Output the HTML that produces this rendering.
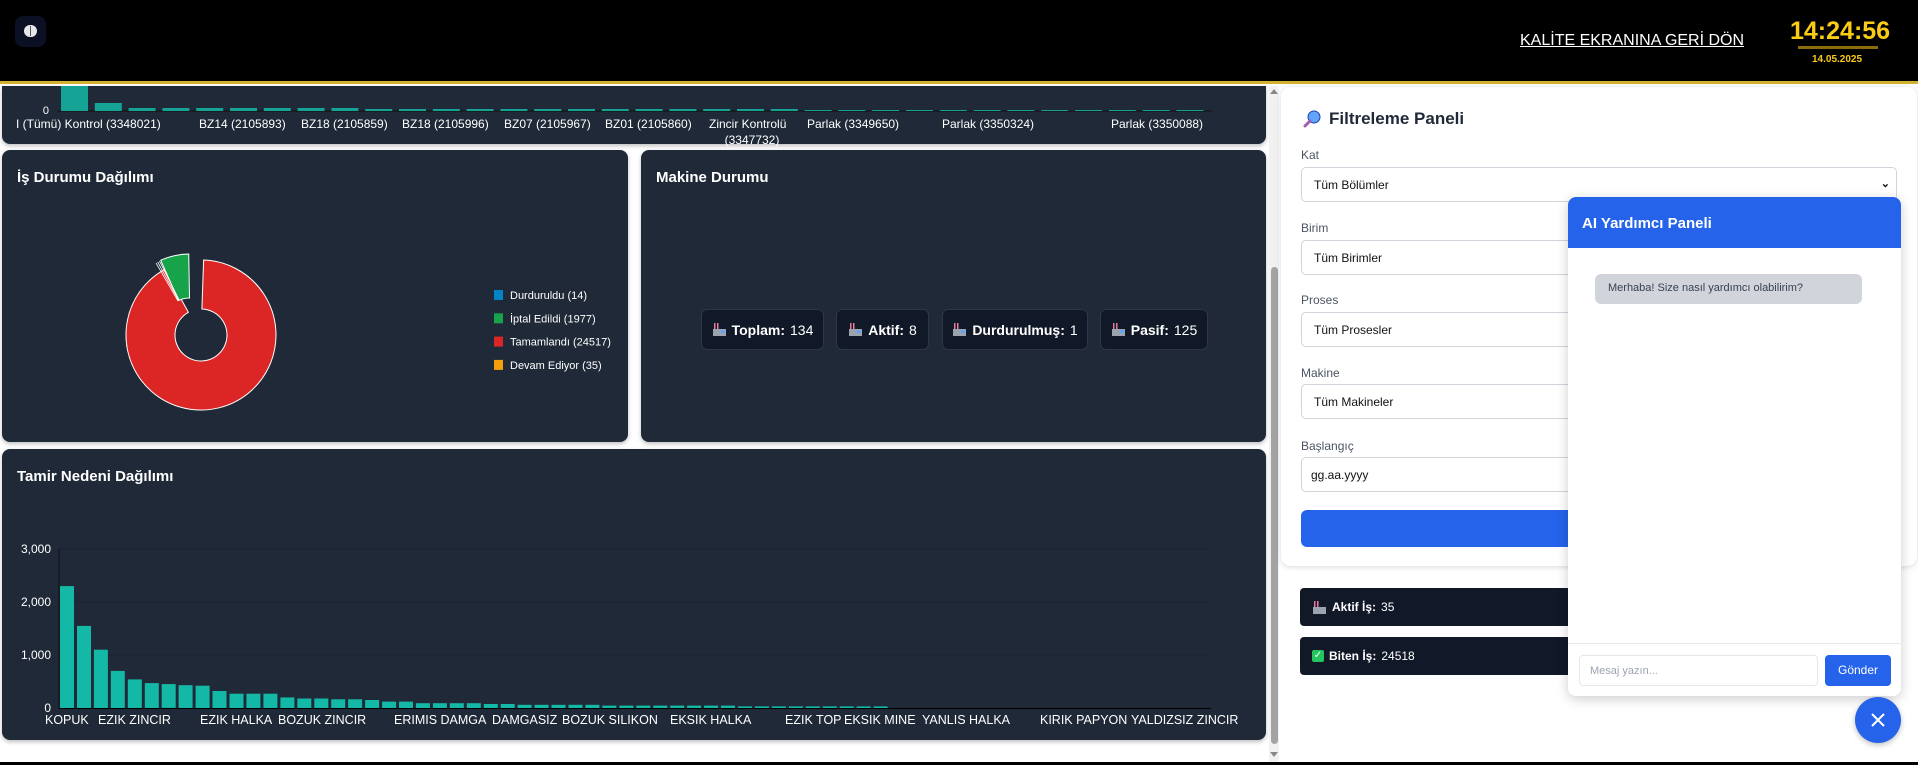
<!DOCTYPE html>
<html><head><meta charset="utf-8">
<style>
*{box-sizing:border-box;margin:0;padding:0}
html,body{width:1918px;height:765px;overflow:hidden;background:#fff;font-family:"Liberation Sans",sans-serif}
.abs{position:absolute}
.card{position:absolute;background:#1f2937;border-radius:8px;box-shadow:0 2px 4px rgba(0,0,0,.25)}
.ct{position:absolute;color:#fff;font-weight:bold;font-size:15px}
.stat{position:absolute;top:309px;height:41px;background:#111827;border:1px solid #2d3748;border-radius:6px;color:#fff;font-size:14px;display:flex;align-items:center;justify-content:center;gap:5px}
.lbl{position:absolute;left:1301px;font-size:12px;color:#4b5563}
.inp{position:absolute;left:1301px;width:596px;height:35px;border:1px solid #d1d5db;border-radius:5px;background:#fff;font-size:12px;color:#111;padding-left:12px;display:flex;align-items:center}
.fac{display:inline-block;width:15px;height:13px}
</style></head><body>
<div class="abs" style="left:0;top:0;width:1918px;height:81px;background:#000"></div>
<div class="abs" style="left:0;top:81px;width:1918px;height:3px;background:#d4b030"></div>
<div class="abs" style="left:15px;top:16px;width:31px;height:31px;background:#0b1024;border-radius:8px"></div>
<div class="abs" style="left:24px;top:25px;width:13px;height:12px;background:#e5e7eb;border-radius:6px"></div>
<div class="abs" style="left:30px;top:26px;width:1px;height:10px;background:#555"></div>
<div class="abs" style="left:1520px;top:32px;color:#fff;font-size:16px;text-decoration:underline;white-space:nowrap">KALİTE EKRANINA GERİ DÖN</div>
<div class="abs" style="left:1790px;top:17px;color:#facc15;font-size:25px;font-weight:bold;white-space:nowrap">14:24:56</div>
<div class="abs" style="left:1798px;top:46px;width:80px;height:3px;background:#8a6d0a"></div>
<div class="abs" style="left:1812px;top:54px;color:#facc15;font-size:10px;font-weight:bold">14.05.2025</div>

<div class="card" style="left:2px;top:86px;width:1264px;height:58px;border-radius:0 0 8px 8px"></div>
<div class="card" style="left:2px;top:150px;width:626px;height:292px"></div>
<div class="card" style="left:641px;top:150px;width:625px;height:292px"></div>
<div class="card" style="left:2px;top:449px;width:1264px;height:291px"></div>
<div class="ct" style="left:17px;top:169px">İş Durumu Dağılımı</div>
<div class="ct" style="left:656px;top:169px">Makine Durumu</div>
<div class="ct" style="left:17px;top:468px">Tamir Nedeni Dağılımı</div>

<svg id="sv" class="abs" style="left:0;top:0" width="1280" height="765" font-family="Liberation Sans, sans-serif"></svg>

<div class="stat" style="left:701px;width:123px"><svg class="fac" viewBox="0 0 15 13"><rect x="2" y="0" width="1.5" height="7" fill="#e879a0"/><rect x="5" y="0" width="1.5" height="7" fill="#e879a0"/><rect x="1" y="6" width="13" height="7" fill="#9ca3af"/><rect x="9" y="7" width="4" height="3" fill="#60a5fa"/></svg><b>Toplam:</b> 134</div>
<div class="stat" style="left:836px;width:93px"><svg class="fac" viewBox="0 0 15 13"><rect x="2" y="0" width="1.5" height="7" fill="#e879a0"/><rect x="5" y="0" width="1.5" height="7" fill="#e879a0"/><rect x="1" y="6" width="13" height="7" fill="#9ca3af"/><rect x="9" y="7" width="4" height="3" fill="#60a5fa"/></svg><b>Aktif:</b> 8</div>
<div class="stat" style="left:942px;width:146px"><svg class="fac" viewBox="0 0 15 13"><rect x="2" y="0" width="1.5" height="7" fill="#e879a0"/><rect x="5" y="0" width="1.5" height="7" fill="#e879a0"/><rect x="1" y="6" width="13" height="7" fill="#9ca3af"/><rect x="9" y="7" width="4" height="3" fill="#60a5fa"/></svg><b>Durdurulmuş:</b> 1</div>
<div class="stat" style="left:1100px;width:108px"><svg class="fac" viewBox="0 0 15 13"><rect x="2" y="0" width="1.5" height="7" fill="#e879a0"/><rect x="5" y="0" width="1.5" height="7" fill="#e879a0"/><rect x="1" y="6" width="13" height="7" fill="#9ca3af"/><rect x="9" y="7" width="4" height="3" fill="#60a5fa"/></svg><b>Pasif:</b> 125</div>

<div class="abs" style="left:1269px;top:86px;width:10px;height:676px;background:#f1f1f1"></div>
<div class="abs" style="left:1271px;top:267px;width:7px;height:477px;background:#a3a3a3;border-radius:4px"></div>
<div class="abs" style="left:1270px;top:89px;width:0;height:0;border-left:4px solid transparent;border-right:4px solid transparent;border-bottom:5px solid #888"></div>
<div class="abs" style="left:1270px;top:752px;width:0;height:0;border-left:4px solid transparent;border-right:4px solid transparent;border-top:5px solid #888"></div>

<div class="abs" style="left:1281px;top:87px;width:636px;height:479px;background:#fff;border-radius:10px;box-shadow:0 1px 6px rgba(0,0,0,.15)"></div>
<svg class="abs" style="left:1303px;top:110px" width="18" height="18" viewBox="0 0 18 18"><circle cx="11" cy="7" r="6" fill="#60a5fa" stroke="#1e40af" stroke-width="1"/><line x1="7" y1="11" x2="2" y2="16" stroke="#9d5fb0" stroke-width="3" stroke-linecap="round"/></svg>
<div class="abs" style="left:1329px;top:109px;font-size:17px;font-weight:bold;color:#1f2937">Filtreleme Paneli</div>
<div class="lbl" style="top:148px">Kat</div>
<div class="inp" style="top:167px">Tüm Bölümler<span style="position:absolute;right:6px;top:9px;font-size:11px;font-weight:bold">&#8964;</span></div>
<div class="lbl" style="top:221px">Birim</div>
<div class="inp" style="top:240px">Tüm Birimler</div>
<div class="lbl" style="top:293px">Proses</div>
<div class="inp" style="top:312px">Tüm Prosesler</div>
<div class="lbl" style="top:366px">Makine</div>
<div class="inp" style="top:384px">Tüm Makineler</div>
<div class="lbl" style="top:439px">Başlangıç</div>
<div class="inp" style="top:457px;padding-left:9px">gg.aa.yyyy</div>
<div class="abs" style="left:1301px;top:510px;width:596px;height:37px;background:#2563eb;border-radius:6px"></div>
<div class="abs" style="left:1300px;top:588px;width:600px;height:38px;background:#111827;border-radius:4px;color:#fff;font-size:12px;display:flex;align-items:center;padding-left:12px;gap:5px"><svg class="fac" viewBox="0 0 15 13"><rect x="2" y="0" width="1.5" height="7" fill="#e879a0"/><rect x="5" y="0" width="1.5" height="7" fill="#e879a0"/><rect x="1" y="6" width="13" height="7" fill="#9ca3af"/></svg><b>Aktif İş:</b> 35</div>
<div class="abs" style="left:1300px;top:637px;width:600px;height:38px;background:#111827;border-radius:4px;color:#fff;font-size:12px;display:flex;align-items:center;padding-left:12px;gap:5px"><span style="display:inline-block;width:12px;height:12px;background:#22c55e;border-radius:2px;color:#fff;font-size:10px;line-height:12px;text-align:center">✓</span><b>Biten İş:</b> 24518</div>

<div class="abs" style="left:1568px;top:197px;width:333px;height:499px;background:#fff;border-radius:8px;box-shadow:0 3px 12px rgba(0,0,0,.2);overflow:hidden">
 <div style="height:51px;background:#2563eb;color:#fff;font-weight:bold;font-size:15px;padding:18px 0 0 14px">AI Yardımcı Paneli</div>
 <div style="position:absolute;left:27px;top:77px;width:267px;height:30px;background:#d1d5db;border-radius:6px;font-size:11px;color:#374151;padding:8px 0 0 13px">Merhaba! Size nasıl yardımcı olabilirim?</div>
 <div style="position:absolute;left:0;top:446px;width:333px;height:1px;background:#e5e7eb"></div>
 <div style="position:absolute;left:11px;top:458px;width:239px;height:31px;border:1px solid #e5e7eb;border-radius:4px;font-size:11px;color:#9ca3af;padding:9px 0 0 10px">Mesaj yazın...</div>
 <div style="position:absolute;left:257px;top:458px;width:66px;height:31px;background:#2563eb;border-radius:4px;color:#fff;font-size:12px;text-align:center;line-height:31px">Gönder</div>
</div>
<div class="abs" style="left:1855px;top:697px;width:46px;height:46px;border-radius:50%;background:#2563eb;box-shadow:0 2px 6px rgba(0,0,0,.25)"></div>
<svg class="abs" style="left:1871px;top:713px" width="14" height="14"><path d="M1 1L13 13M13 1L1 13" stroke="#fff" stroke-width="2"/></svg>
<div class="abs" style="left:0;top:762px;width:1918px;height:3px;background:#000"></div>

<script>
var sv=document.getElementById('sv'),h='';
h+='<text x="49" y="114" fill="#fff" font-size="11" text-anchor="end">0</text>';
h+='<line x1="58" y1="111" x2="1212" y2="111" stroke="#111"/>';
for(var i=0;i<34;i++){var x=61+i*33.8,t=i==0?86:i==1?103:i<9?108:i<22?109:110;h+='<rect x="'+x.toFixed(1)+'" y="'+t+'" width="27" height="'+(111-t)+'" fill="#14b8a6" fill-opacity=".85"/>';}
var tl=[[16,'I (Tümü) Kontrol (3348021)'],[199,'BZ14 (2105893)'],[301,'BZ18 (2105859)'],[402,'BZ18 (2105996)'],[504,'BZ07 (2105967)'],[605,'BZ01 (2105860)'],[709,'Zincir Kontrolü'],[807,'Parlak (3349650)'],[942,'Parlak (3350324)'],[1111,'Parlak (3350088)']];
tl.forEach(function(a){h+='<text x="'+a[0]+'" y="128" fill="#fff" font-size="12">'+a[1]+'</text>';});
h+='<text x="752" y="144" fill="#fff" font-size="12" text-anchor="middle">(3347732)</text>';
function P(cx,cy,r,a){a=(a-90)*Math.PI/180;return [cx+r*Math.cos(a),cy+r*Math.sin(a)];}
function arc(cx,cy,R,r,a0,a1,c){var l=(a1-a0)>180?1:0,p1=P(cx,cy,R,a0),p2=P(cx,cy,R,a1),p3=P(cx,cy,r,a1),p4=P(cx,cy,r,a0);
return '<path d="M'+p1+'A'+R+' '+R+' 0 '+l+' 1 '+p2+'L'+p3+'A'+r+' '+r+' 0 '+l+' 0 '+p4+'Z" fill="'+c+'" stroke="#fff" stroke-width="1"/>';}
h+=arc(201,335,75,26,2,331,'#dc2626');
h+=arc(190,326,72,28,336,359,'#16a34a');
for(var k=0;k<3;k++){var a=330+k*1.5,p=P(193,327,30,a),q=P(193,327,74,a);h+='<line x1="'+p[0]+'" y1="'+p[1]+'" x2="'+q[0]+'" y2="'+q[1]+'" stroke="#fff" stroke-width=".8"/>';}
var lg=[['#0284c7','Durduruldu (14)'],['#16a34a','İptal Edildi (1977)'],['#dc2626','Tamamlandı (24517)'],['#f59e0b','Devam Ediyor (35)']];
lg.forEach(function(a,i){var y=290+i*23.3;h+='<rect x="494" y="'+y+'" width="9" height="10" fill="'+a[0]+'"/><text x="510" y="'+(y+9)+'" fill="#fff" font-size="11">'+a[1]+'</text>';});
var yb=708,sc=159/3000;
[[1000,655],[2000,602],[3000,549]].forEach(function(g){h+='<line x1="59" y1="'+g[1]+'" x2="1211" y2="'+g[1]+'" stroke="#1a2230" stroke-width="1"/>';});
[[0,708],[1000,655],[2000,602],[3000,549]].forEach(function(g){h+='<text x="51" y="'+(g[1]+4)+'" fill="#fff" font-size="12" text-anchor="end">'+(g[0]?g[0].toLocaleString('en-US'):'0')+'</text>';});
h+='<line x1="59" y1="549" x2="59" y2="708" stroke="#111"/>';
var v=[2300,1550,1100,700,540,470,450,430,420,320,270,270,270,200,180,180,165,165,150,120,120,90,90,90,90,75,75,60,60,60,60,60,45,45,45,45,45,45,45,45,30,30,30,30,30,30,30,30,30];
for(var i=0;i<68;i++){var x=60+i*16.95,val=v[i]||0,bh=Math.max(val*sc,val?1.5:0);if(bh)h+='<rect x="'+x.toFixed(1)+'" y="'+(yb-bh).toFixed(1)+'" width="14" height="'+bh.toFixed(1)+'" fill="#14b8a6"/>';}
h+='<line x1="59" y1="708.5" x2="1211" y2="708.5" stroke="#000"/>';
var xl=[[45,'KOPUK'],[98,'EZIK ZINCIR'],[200,'EZIK HALKA'],[278,'BOZUK ZINCIR'],[394,'ERIMIS DAMGA'],[492,'DAMGASIZ'],[562,'BOZUK SILIKON'],[670,'EKSIK HALKA'],[785,'EZIK TOP'],[844,'EKSIK MINE'],[922,'YANLIS HALKA'],[1040,'KIRIK PAPYON'],[1131,'YALDIZSIZ ZINCIR']];
xl.forEach(function(a){h+='<text x="'+a[0]+'" y="724" fill="#fff" font-size="12.5">'+a[1]+'</text>';});
sv.innerHTML=h;
</script>
</body></html>
